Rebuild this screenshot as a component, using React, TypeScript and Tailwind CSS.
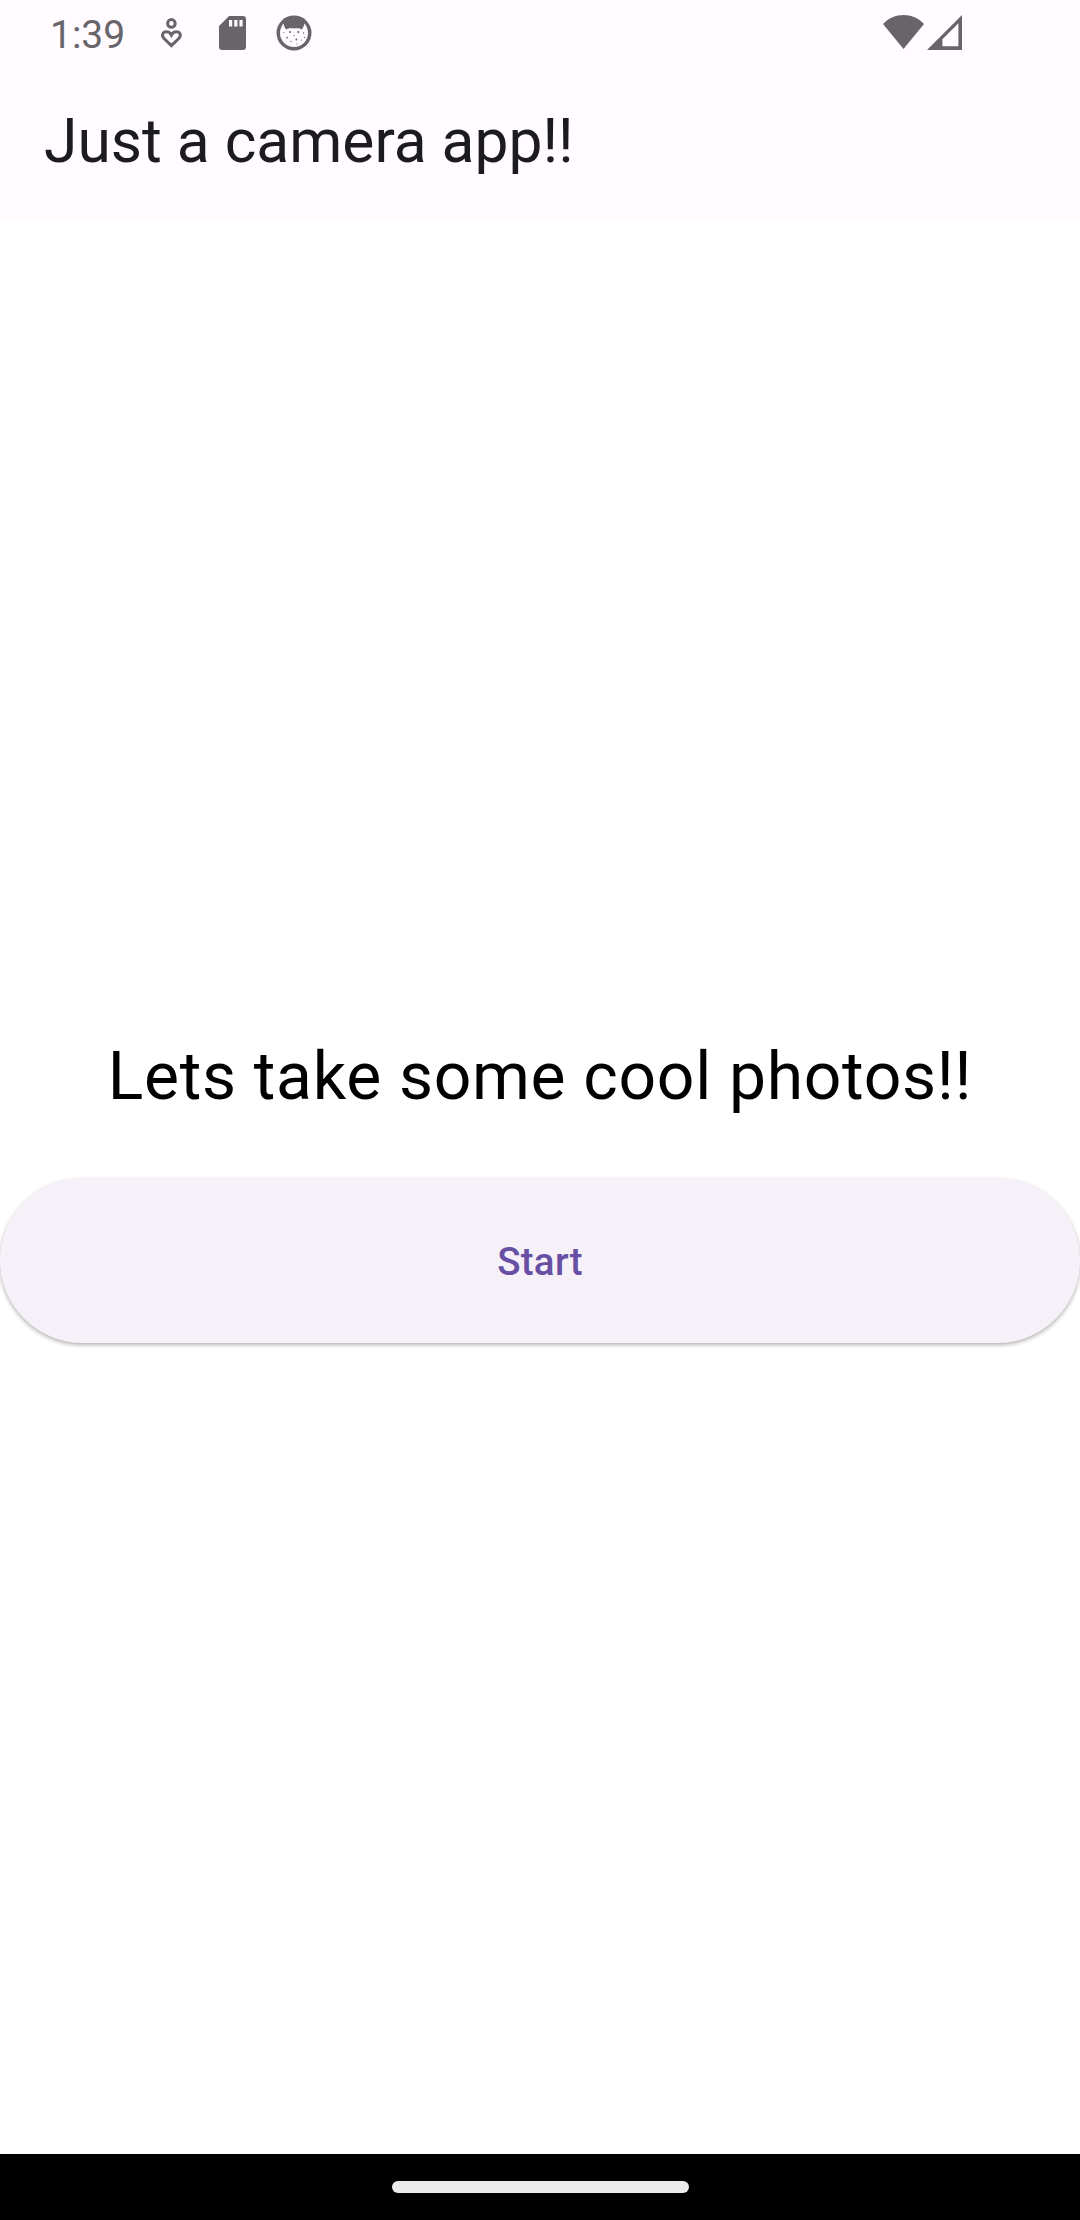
function HeartPersonIcon() {
  return (
    <svg className="h-[32px] w-[23px]" viewBox="0 0 23 32" fill="none" stroke="#67656a" strokeWidth="3">
      <circle cx="11.4" cy="5.4" r="3.8" />
      <path d="M11.4 27.6 L3.8 20.2 C1.2 17.2 2.8 13.8 6.4 13.8 C8.8 13.8 10.4 15 11.4 17 C12.4 15 14 13.8 16.4 13.8 C20 13.8 21.6 17.2 19 20.2 Z" />
    </svg>
  );
}

function SdCardIcon() {
  return (
    <svg className="h-[34px] w-[27px]" viewBox="0 0 27 34">
      <path
        fill="#67656a"
        fillRule="evenodd"
        d="M10 0 H24 Q27 0 27 3 V31 Q27 34 24 34 H3 Q0 34 0 31 V10 Z M10 4 V10.5 H13.2 V4 Z M15.2 4 V10.5 H18.4 V4 Z M20.4 4 V10.5 H23.6 V4 Z"
      />
    </svg>
  );
}

function CatFaceIcon() {
  return (
    <svg className="h-[36px] w-[36px]" viewBox="0 0 36 36">
      <circle cx="18" cy="18" r="17.5" fill="#67656a" />
      <path
        fill="#fffbff"
        d="M7.6 8.6 C8 10.8 8.8 13 10.2 14.6 C12.4 12.8 15 13.4 18 13.4 C21 13.4 23.6 12.8 25.8 14.6 C27.2 13 28 10.8 28.4 8.6 C30.8 11.2 32 14.6 32 18 A14 14 0 0 1 4 18 C4 14.6 5.2 11.2 7.6 8.6 Z"
      />
      <g fill="#67656a">
        <circle cx="14" cy="17" r="1" />
        <circle cx="22.3" cy="17" r="1.1" />
        <circle cx="8" cy="17.6" r="0.6" />
        <circle cx="27.6" cy="18" r="0.7" />
        <circle cx="11" cy="22.6" r="0.9" />
        <circle cx="25.4" cy="25" r="0.6" />
        <circle cx="18" cy="20.6" r="0.7" />
        <circle cx="15" cy="26.4" r="0.7" />
        <circle cx="20.4" cy="24.4" r="1" />
        <circle cx="28.4" cy="22.4" r="0.6" />
        <circle cx="21" cy="29" r="0.6" />
      </g>
    </svg>
  );
}

function WifiIcon() {
  return (
    <svg className="h-[34px] w-[41px]" viewBox="0 0 41 34">
      <path fill="#67656a" d="M0 9 C5.5 3 13 0 20.5 0 C28 0 35.5 3 41 9 L20.5 34 Z" />
    </svg>
  );
}

function SignalIcon() {
  return (
    <svg className="h-[35px] w-[35px]" viewBox="0 0 35 35">
      <path fill="#67656a" fillRule="evenodd" d="M35 0 V35 H0 Z M31.4 8.2 L15.4 24.2 V31.2 H31.4 Z" />
    </svg>
  );
}

function StatusBar() {
  return (
    <div className="flex h-[66px] items-start text-[#67656a]">
      <span className="ml-[50px] mt-[13px] w-[76px] whitespace-nowrap text-[39px] leading-[45px]">1:39</span>
      <span className="ml-[34px] mt-[18px]">
        <HeartPersonIcon />
      </span>
      <span className="ml-[36px] mt-[16px]">
        <SdCardIcon />
      </span>
      <span className="ml-[30px] mt-[15px]">
        <CatFaceIcon />
      </span>
      <span className="ml-auto mt-[15px]">
        <WifiIcon />
      </span>
      <span className="ml-[3px] mr-[118px] mt-[15px]">
        <SignalIcon />
      </span>
    </div>
  );
}

export default function App() {
  return (
    <div className="flex h-[2220px] w-[1080px] flex-col overflow-hidden bg-white font-['Roboto',sans-serif]">
      <header className="h-[220px] bg-[#fffbff]">
        <StatusBar />
        <h1 className="ml-[44px] pt-[38px] text-[60.5px] leading-[76px] text-[#1c1b1f]">Just a camera app!!</h1>
      </header>
      <main className="flex flex-1 flex-col justify-center">
        <p className="mb-[56px] text-center text-[66px] leading-[91px] tracking-[0.69px] text-black">
          Lets take some cool photos!!
        </p>
        <button className="h-[165px] w-full rounded-full bg-[#f6f1f9] pt-[2px] text-[38.5px] font-medium leading-[45px] tracking-[0.275px] text-[#6750a4] shadow-[0_2px_4px_rgba(0,0,0,0.3)]">
          Start
        </button>
      </main>
      <nav className="flex h-[66px] items-center justify-center bg-black">
        <div className="h-[12px] w-[297px] rounded-full bg-[#ebebeb]" />
      </nav>
    </div>
  );
}
